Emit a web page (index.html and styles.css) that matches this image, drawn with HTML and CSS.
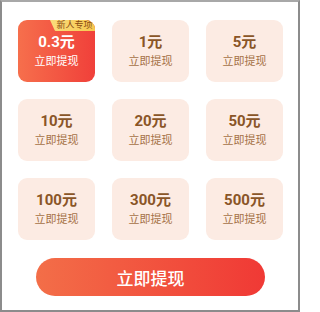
FILE: index.html
```html
<!DOCTYPE html>
<html>
<head>
<meta charset="utf-8">
<link rel="stylesheet" href="styles.css">
</head>
<body>
<div class="frame">
  <div class="grid">
    <div class="card active">
      <span class="badge">新人专项</span>
      <div class="amount">0.3元</div>
      <div class="label">立即提现</div>
    </div>
    <div class="card"><div class="amount">1元</div><div class="label">立即提现</div></div>
    <div class="card"><div class="amount">5元</div><div class="label">立即提现</div></div>
    <div class="card"><div class="amount">10元</div><div class="label">立即提现</div></div>
    <div class="card"><div class="amount">20元</div><div class="label">立即提现</div></div>
    <div class="card"><div class="amount">50元</div><div class="label">立即提现</div></div>
    <div class="card"><div class="amount">100元</div><div class="label">立即提现</div></div>
    <div class="card"><div class="amount">300元</div><div class="label">立即提现</div></div>
    <div class="card"><div class="amount">500元</div><div class="label">立即提现</div></div>
  </div>
  <div class="btn-row">
    <button class="btn">立即提现</button>
  </div>
</div>
</body>
</html>
```
FILE: styles.css
```css
* { box-sizing: border-box; }
html, body { margin: 0; padding: 0; background: #fff; }
body { font-family: Roboto, "Noto Sans CJK SC", sans-serif; }
.frame {
  width: 300px;
  height: 312px;
  border: 2px solid #8c8c8c;
  border-top-color: #a8a8a8;
  background: #fff;
  padding: 18px 0 0 16px;
}
.grid {
  display: grid;
  grid-template-columns: repeat(3, 77px);
  grid-auto-rows: 62px;
  column-gap: 17px;
  row-gap: 17px;
}
.card {
  position: relative;
  background: #fcebe3;
  border-radius: 9px;
  display: flex;
  flex-direction: column;
  align-items: center;
  padding-top: 13px;
  overflow: hidden;
}
.amount {
  font-size: 15px;
  font-weight: 700;
  line-height: 19px;
  color: #8a5527;
}
.label {
  font-size: 11px;
  line-height: 14px;
  margin-top: 3px;
  color: #a57146;
}
.card.active {
  background: linear-gradient(90deg, #f66f4c 0%, #f0403a 100%);
}
.card.active .amount, .card.active .label { color: #fff; }
.badge {
  position: absolute;
  top: 0;
  right: 0;
  height: 11px;
  width: 45px;
  padding: 0 2px 0 6px;
  background: linear-gradient(90deg, #fadc7c, #f6c94f);
  color: #8a4a12;
  font-size: 9px;
  line-height: 11px;
  white-space: nowrap;
  text-align: center;
  border-bottom-left-radius: 6px;
  clip-path: polygon(0 0, 100% 0, 100% 100%, 5px 100%);
}
.btn-row {
  display: flex;
  padding-left: 18px;
  margin-top: 18px;
}
.btn {
  width: 229px;
  height: 38px;
  border: none;
  border-radius: 19px;
  background: linear-gradient(90deg, #f36e48 0%, #f03935 100%);
  color: #fff;
  font-family: Roboto, "Noto Sans CJK SC", sans-serif;
  font-size: 17px;
  font-weight: 500;
  padding: 0;
}
```
